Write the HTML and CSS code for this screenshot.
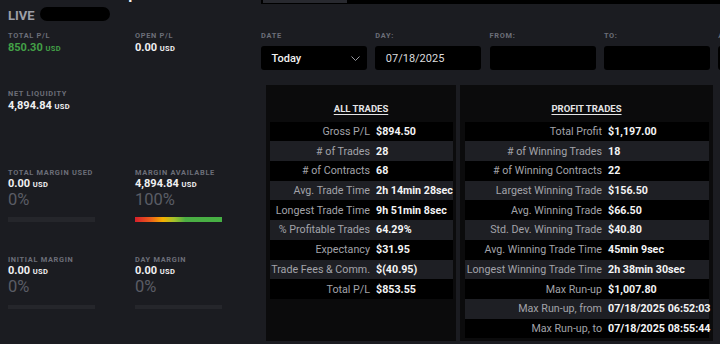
FILE: index.html
```html
<!DOCTYPE html>
<html lang="en">
<head>
<meta charset="utf-8">
<title>Account Snapshot</title>
<link rel="stylesheet" href="styles.css">
</head>
<body>
<div class="page">
  <span class="cut-title">p</span>
  <aside class="left">
    <div class="live-row"><span class="live">LIVE</span><span class="redact"></span></div>

    <div class="stats s1">
      <div class="stat">
        <div class="lbl">TOTAL P/L</div>
        <div class="val green">850.30 <span class="cur">USD</span></div>
      </div>
      <div class="stat">
        <div class="lbl">OPEN P/L</div>
        <div class="val">0.00 <span class="cur">USD</span></div>
      </div>
    </div>

    <div class="stats s2">
      <div class="stat">
        <div class="lbl">NET LIQUIDITY</div>
        <div class="val">4,894.84 <span class="cur">USD</span></div>
      </div>
    </div>

    <div class="stats s3">
      <div class="stat">
        <div class="lbl">TOTAL MARGIN USED</div>
        <div class="val">0.00 <span class="cur">USD</span></div>
        <div class="pct">0%</div>
        <div class="bar"></div>
      </div>
      <div class="stat">
        <div class="lbl">MARGIN AVAILABLE</div>
        <div class="val">4,894.84 <span class="cur">USD</span></div>
        <div class="pct">100%</div>
        <div class="bar grad"></div>
      </div>
    </div>

    <div class="stats s4">
      <div class="stat">
        <div class="lbl">INITIAL MARGIN</div>
        <div class="val">0.00 <span class="cur">USD</span></div>
        <div class="pct">0%</div>
        <div class="bar"></div>
      </div>
      <div class="stat">
        <div class="lbl">DAY MARGIN</div>
        <div class="val">0.00 <span class="cur">USD</span></div>
        <div class="pct">0%</div>
        <div class="bar"></div>
      </div>
    </div>

    <div class="stats s5">
      <div class="stat">
        <div class="lbl">MAINTENANCE MARGIN</div>
      </div>
    </div>
  </aside>

  <main class="right">
    <div class="topstrip"><span class="tabstub"></span></div>

    <div class="filters">
      <div class="field">
        <div class="flabel">DATE</div>
        <div class="box select"><span class="btext">Today</span>
          <svg class="chev" width="9" height="5" viewBox="0 0 9 5"><path d="M0.5 0.5 L4.5 4.5 L8.5 0.5" fill="none" stroke="#9b9ca2" stroke-width="1"/></svg>
        </div>
      </div>
      <div class="field">
        <div class="flabel">DAY:</div>
        <div class="box"><span class="btext date">07/18/2025</span></div>
      </div>
      <div class="field">
        <div class="flabel">FROM:</div>
        <div class="box"></div>
      </div>
      <div class="field">
        <div class="flabel">TO:</div>
        <div class="box"></div>
      </div>
      <div class="field">
        <div class="flabel">ACCOUNT:</div>
        <div class="box"></div>
      </div>
    </div>

    <div class="panels">
      <section class="panel p1">
        <div class="ptitle">ALL TRADES</div>
        <div class="tbl">
          <div class="row"><span class="k">Gross P/L</span><span class="v">$894.50</span></div>
          <div class="row"><span class="k"># of Trades</span><span class="v">28</span></div>
          <div class="row"><span class="k"># of Contracts</span><span class="v">68</span></div>
          <div class="row"><span class="k">Avg. Trade Time</span><span class="v">2h 14min 28sec</span></div>
          <div class="row"><span class="k">Longest Trade Time</span><span class="v">9h 51min 8sec</span></div>
          <div class="row"><span class="k">% Profitable Trades</span><span class="v">64.29%</span></div>
          <div class="row"><span class="k">Expectancy</span><span class="v">$31.95</span></div>
          <div class="row"><span class="k">Trade Fees &amp; Comm.</span><span class="v">$(40.95)</span></div>
          <div class="row"><span class="k">Total P/L</span><span class="v">$853.55</span></div>
        </div>
      </section>
      <section class="panel p2">
        <div class="ptitle">PROFIT TRADES</div>
        <div class="tbl">
          <div class="row"><span class="k">Total Profit</span><span class="v">$1,197.00</span></div>
          <div class="row"><span class="k"># of Winning Trades</span><span class="v">18</span></div>
          <div class="row"><span class="k"># of Winning Contracts</span><span class="v">22</span></div>
          <div class="row"><span class="k">Largest Winning Trade</span><span class="v">$156.50</span></div>
          <div class="row"><span class="k">Avg. Winning Trade</span><span class="v">$66.50</span></div>
          <div class="row"><span class="k">Std. Dev. Winning Trade</span><span class="v">$40.80</span></div>
          <div class="row"><span class="k">Avg. Winning Trade Time</span><span class="v">45min 9sec</span></div>
          <div class="row"><span class="k">Longest Winning Trade Time</span><span class="v">2h 38min 30sec</span></div>
          <div class="row"><span class="k">Max Run-up</span><span class="v">$1,007.80</span></div>
          <div class="row"><span class="k">Max Run-up, from</span><span class="v">07/18/2025 06:52:03</span></div>
          <div class="row"><span class="k">Max Run-up, to</span><span class="v">07/18/2025 08:55:44</span></div>
        </div>
      </section>
    </div>
  </main>
</div>
</body>
</html>
```

FILE: styles.css
```css
html, body {
  margin: 0;
  padding: 0;
  background: #1b1c21;
  overflow: hidden;
}
body {
  width: 720px;
  height: 344px;
  font-family: Roboto, "Liberation Sans", Arial, sans-serif;
}
.page {
  position: relative;
  display: flex;
  height: 344px;
  overflow: hidden;
}
.cut-title {
  position: absolute;
  left: 128px;
  top: -18px;
  font-size: 19px;
  line-height: 20px;
  font-weight: 500;
  color: #f2f2f2;
}

/* left column */
.left {
  flex: none;
  width: 253px;
  padding: 7px 0 0 8px;
}
.live-row {
  display: flex;
  gap: 5px;
  height: 14px;
}
.live {
  font-size: 13px;
  line-height: 14px;
  font-weight: 700;
  color: #9d9fa7;
  margin-top: 2px;
}
.redact {
  width: 70px;
  height: 14px;
  background: #000;
  border-radius: 7px;
}
.stats {
  display: grid;
  grid-template-columns: 127px 118px;
}
.s1 { margin-top: 10px; }
.s2 { margin-top: 34.5px; }
.s3 { margin-top: 55.2px; }
.s4 { margin-top: 32.8px; }
.s5 { margin-top: 32.5px; }
.lbl {
  font-size: 7.4px;
  line-height: 9px;
  height: 9.5px;
  font-weight: 700;
  letter-spacing: 0.7px;
  color: #6c6e78;
  white-space: nowrap;
}
.val {
  font-size: 11px;
  line-height: 13px;
  font-weight: 700;
  color: #f0f0f2;
  white-space: nowrap;
}
.val.green { color: #43a047; }
.cur {
  font-size: 7.5px;
  font-weight: 700;
  letter-spacing: 0.3px;
}
.pct {
  font-size: 16.5px;
  line-height: 20px;
  font-weight: 400;
  color: #5a5c65;
  margin-top: -1px;
}
.bar {
  width: 87px;
  height: 4.7px;
  margin-top: 7.3px;
  background: #25262b;
}
.bar.grad {
  background: linear-gradient(90deg, #d61f2b 0%, #ec5a1c 17%, #f4b000 32%, #a4c22c 45%, #4cae44 58%, #46b044 100%);
}

/* right column */
.right {
  flex: 1;
  min-width: 0;
  overflow: hidden;
}
.topstrip {
  height: 4px;
  background: #000;
  padding-left: 2px;
}
.tabstub {
  display: block;
  width: 84px;
  height: 3px;
  background: #28292f;
}
.filters {
  display: flex;
  gap: 8.3px;
  margin-top: 27px;
}
.field {
  flex: none;
  width: 106px;
}
.flabel {
  font-size: 7.4px;
  line-height: 9px;
  font-weight: 700;
  letter-spacing: 0.7px;
  color: #6c6e78;
  margin-bottom: 6px;
  white-space: nowrap;
}
.box {
  height: 24px;
  background: #000;
  border-radius: 3px;
  display: flex;
  align-items: center;
  justify-content: space-between;
  padding: 0 7px 0 10.5px;
}
.btext {
  font-size: 11px;
  font-weight: 500;
  color: #f0f0f0;
}
.btext.date {
  font-weight: 400;
  color: #dcdcde;
}
.chev { display: block; }

.panels {
  display: flex;
  gap: 4px;
  margin: 15px 0 0 5px;
  height: 256px;
}
.panel {
  flex: none;
  background: #0b0b0c;
  padding-top: 18.2px;
}
.p1 { width: 190px; }
.p2 { width: 253px; }
.ptitle {
  text-align: center;
  font-size: 9.5px;
  line-height: 12px;
  font-weight: 700;
  color: #e4e4e6;
  text-decoration: underline;
  text-underline-offset: 1.5px;
  margin-bottom: 6.5px;
}
.tbl {
  display: flex;
  flex-direction: column;
}
.p1 .tbl { margin: 0 3px 0 4px; }
.p2 .tbl { margin: 0 4px 0 5px; }
.row {
  display: grid;
  height: 19.7px;
  align-items: center;
  font-size: 10.7px;
  white-space: nowrap;
  background: #000;
}
.row:nth-child(even) { background: #1e1f24; }
.p1 .row { grid-template-columns: 103px 1fr; }
.p2 .row { grid-template-columns: 140px 1fr; }
.k {
  text-align: right;
  padding-right: 3px;
  color: #a2a3a9;
}
.v {
  padding-left: 3px;
  font-weight: 700;
  color: #f4f4f5;
}
```
